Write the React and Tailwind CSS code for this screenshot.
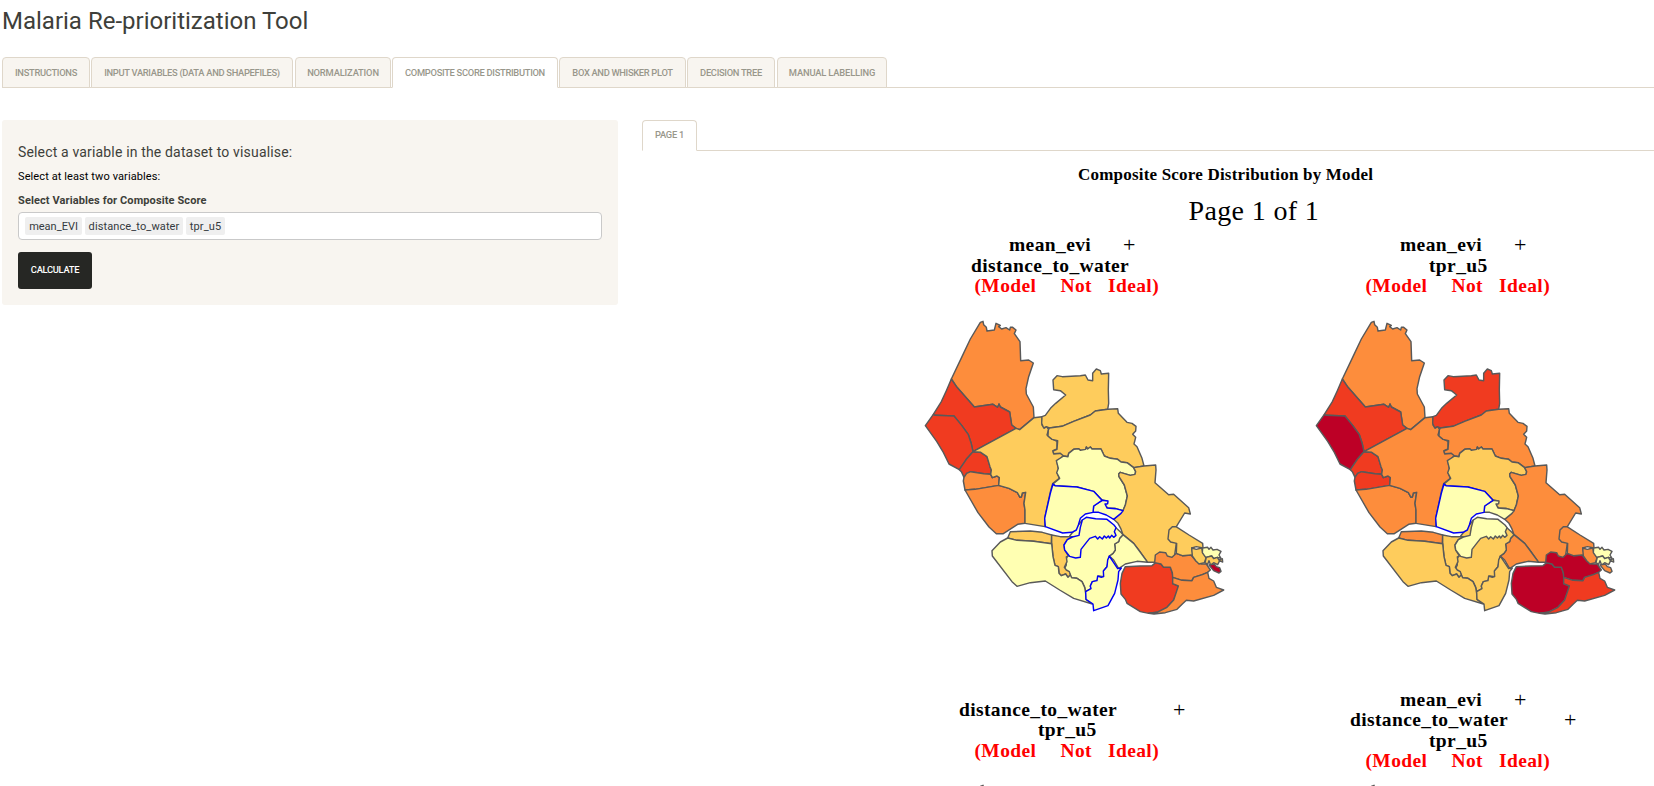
const REGIONS = {
  A: '222,34 214,37 184,87 159,140 127,207 144,232 196,291 252,283 266,292 270,282 274,291 302,306 308,345 321,355 332,359 375,323 373,291 352,252 351,236 359,200 373,159 359,150 335,152 333,95 316,71 321,60 311,52 304,52 302,60 291,53 278,57 269,50 274,46 261,40 256,60 234,63 232,52 224,44',
  B: '127,207 112,242 97,275 73,313 78,316 135,318 158,346 178,374 186,398 192,425 321,355 308,345 302,306 274,291 270,282 266,292 252,283 196,291 144,232',
  C: '73,313 49,347 83,394 103,427 120,462 151,479 172,448 192,425 186,398 178,374 158,346 135,318 78,316',
  D: '151,479 157,485 165,502 173,490 185,485 225,491 245,493 247,480 243,470 234,440 215,427 192,425 172,448',
  E: '165,502 163,513 168,540 198,538 269,526 271,503 264,498 250,503 245,493 225,491 185,485 173,490',
  F: '168,540 207,608 240,651 262,671 283,671 326,643 348,640 348,600 345,580 350,547 340,549 337,561 333,562 325,548 300,535 269,526 198,538',
  G: '192,425 321,355 332,359 375,323 399,320 399,345 407,354 414,348 416,355 419,358 414,375 426,385 444,394 444,417 432,422 434,431 462,429 467,435 462,438 444,455 449,480 445,490 451,505 431,521 424,546 408,620 408,650 348,640 348,600 345,580 350,547 340,549 337,561 333,562 325,548 300,535 269,526 271,503 264,498 250,503 245,493 247,480 243,470 234,440 215,427',
  H: '399,320 409,316 426,293 440,280 470,255 454,242 434,239 432,210 444,197 460,200 514,197 529,195 537,210 551,212 551,190 562,177 574,182 577,192 599,190 598,240 599,280 596,298 559,303 544,315 494,334 459,349 421,354 412,350 404,354 398,340',
  I: '421,354 459,349 494,334 544,315 559,303 596,298 626,296 628,310 654,337 669,340 681,349 680,363 671,373 680,382 675,402 684,410 699,445 705,468 674,473 654,458 636,456 626,448 604,445 586,438 576,417 549,417 544,411 536,417 532,411 530,418 514,421 509,416 494,418 479,430 477,440 464,438 454,430 434,431 432,423 444,418 446,392 429,388 417,378 418,360',
  J: '464,438 477,440 479,430 494,418 509,416 514,421 530,418 532,411 536,417 544,411 549,417 576,417 586,438 604,445 626,448 636,456 654,458 674,473 680,485 678,493 664,496 634,487 629,492 630,500 646,525 655,558 649,585 642,602 619,595 599,595 589,588 594,573 579,570 554,544 504,531 438,527 432,522 452,505 443,488 448,475 442,452',
  K: '432,522 438,527 504,531 554,544 579,571 554,588 552,607 529,612 514,625 508,645 502,660 489,667 461,669 409,650 407,625 424,550',
  L: '579,571 597,573 596,581 588,582 594,594 619,596 642,602 636,610 614,628 592,615 569,607 552,607 554,588',
  M: '705,468 740,465 741,480 738,518 779,554 794,553 839,593 844,612 827,609 802,650 802,700 796,742 740,757 716,757 689,720 674,700 642,674 635,655 627,640 614,628 642,602 649,585 655,558 646,525 630,500 629,492 634,487 664,496 678,493 680,485 674,473',
  N: '642,674 674,700 689,720 716,757 684,754 649,762 629,776 614,750 601,738 612,730 619,720 617,702 629,695 632,685',
  P: '482,678 520,630 600,635 619,652 637,668 642,674 632,685 629,695 617,702 619,720 612,730 601,738 594,770 586,780 584,800 569,798 564,812 550,815 544,828 546,836 530,845 527,832 519,815 504,805 486,803 484,793 471,783 466,777 472,765 468,750 474,742',
  O: '532,622 560,626 594,628 615,645 621,653 616,665 621,676 614,682 608,676 602,684 598,678 592,684 586,678 580,687 572,680 566,687 559,679 542,685 530,700 516,718 514,742 500,744 482,739 467,720 465,705 475,689 490,681 510,676 514,652 520,630',
  Q: '304,665 364,663 400,667 428,675 427,701 374,694 324,691 296,684',
  R: '428,675 454,680 493,680 475,689 465,705 467,720 478,738 472,741 474,755 466,772 472,780 481,785 484,795 477,802 470,792 457,797 450,790 448,770 438,766 432,740 428,700',
  W: '296,684 324,691 374,694 428,701 432,740 438,766 448,770 450,790 457,797 470,792 477,802 484,795 488,803 504,805 519,815 527,832 530,850 531,868 550,882 494,865 452,840 409,813 364,818 324,829 309,815 250,738 249,722 274,696',
  S: '601,738 612,755 626,776 637,774 629,785 627,810 617,850 597,887 554,902 552,882 531,868 530,845 546,836 544,828 550,815 564,812 566,798 577,802 584,800 583,783 594,770 596,750',
  T: '649,770 694,768 729,767 740,758 756,762 764,772 784,772 790,788 792,800 791,821 808,828 804,845 794,870 774,892 744,907 719,910 694,905 654,880 649,868 636,852 634,820 639,790',
  U: '737,758 739,735 752,726 770,728 775,738 789,742 802,730 820,737 846,735 860,752 878,762 892,762 904,780 896,787 880,794 854,802 849,812 819,811 791,802 790,788 784,772 764,772 756,762',
  V: '791,802 819,811 849,812 854,802 880,794 896,787 900,805 914,813 922,832 944,840 914,856 854,873 832,871 820,882 804,898 769,908 735,912 719,910 744,907 774,892 794,870 808,828 791,821',
  X: '790,650 801,650 840,675 881,700 882,714 862,710 848,714 854,738 846,735 820,737 802,730 803,700 785,696 777,687 780,660',
  Y: '848,714 862,718 878,714 882,730 892,742 886,758 870,762 860,752 850,738',
  Z: '881,714 896,712 900,718 906,712 912,720 924,718 936,724 930,735 936,745 925,742 914,746 908,738 890,742 880,728',
  Za: '892,742 908,738 914,746 925,742 930,750 940,746 941,756 932,752 926,764 914,758 905,766 900,752 896,763 888,758',
  Zb: '900,765 916,762 922,770 932,773 936,784 930,789 914,782',
};

const FILLS = {
  y: 'fill-[#ffffb2]',
  l: 'fill-[#fecc5c]',
  o: 'fill-[#fd8d3c]',
  r: 'fill-[#f03b20]',
  d: 'fill-[#bd0026]',
};

const MAP_ONE = {
  A: 'o', B: 'r', C: 'r', D: 'r', E: 'o', F: 'o', G: 'l', H: 'l', I: 'l', J: 'y', M: 'l', N: 'y',
  P: 'y', Q: 'l', R: 'l', W: 'y', T: 'r', U: 'o', V: 'o', X: 'l', Y: 'l', Z: 'y', Za: 'l', Zb: 'd',
  L: 'y', K: 'y', O: 'y', S: 'y',
};
const MAP_TWO = {
  A: 'o', B: 'r', C: 'd', D: 'r', E: 'r', F: 'o', G: 'o', H: 'r', I: 'o', J: 'l', M: 'o', N: 'o',
  P: 'l', Q: 'o', R: 'l', W: 'l', T: 'd', U: 'd', V: 'r', X: 'o', Y: 'o', Z: 'y', Za: 'y', Zb: 'o',
  L: 'y', O: 'y', S: 'l', K: 'y',
};

function DistrictMap({ levels, outlined }) {
  return (
    <svg viewBox="0 0 1062 960" className="-ml-[30px] block h-[320px] w-[354px]" strokeLinejoin="round">
      {Object.entries(levels).map(([id, level]) => (
        <polygon
          key={id}
          points={REGIONS[id]}
          strokeWidth="4.3"
          className={`${FILLS[level]} ${outlined.includes(id) ? 'stroke-[#0000f5]' : 'stroke-[#595959]'}`}
        />
      ))}
    </svg>
  );
}

const TABS = [
  ['Instructions', 'w-[88px] mr-[1px]'],
  ['Input Variables (Data and Shapefiles)', 'w-[202px] mr-[2px]'],
  ['Normalization', 'w-[96px] mr-[1px]'],
  ['Composite Score Distribution', 'w-[166px] mr-[1px]'],
  ['Box and Whisker Plot', 'w-[127px] mr-[1px]'],
  ['Decision Tree', 'w-[88px] mr-[2px]'],
  ['Manual Labelling', 'w-[110px]'],
];

const TRACKING = {
  Normalization: 'tracking-[-0.3px] pr-[3px]',
  'Box and Whisker Plot': 'tracking-[-0.33px]',
  'Manual Labelling': 'tracking-[-0.3px]',
  'Decision Tree': 'tracking-[-0.3px]',
  'Page 1': 'tracking-[-0.25px] pb-[2px]',
};
TRACKING.Normalization = 'tracking-[-0.16px]';
TRACKING['Manual Labelling'] = 'tracking-[-0.16px]';

function Tab({ label, active, size }) {
  return (
    <button
      className={`-mb-px flex h-[31px] shrink-0 items-center justify-center rounded-t-[4px] border border-[#dfd7ca] text-[9.35px] leading-none font-medium whitespace-nowrap text-[#98978b] uppercase ${size} ${TRACKING[label] ?? 'tracking-[-0.3px]'} ${active ? 'border-b-white bg-white' : 'bg-[#f8f5f0]'}`}
    >
      {label}
    </button>
  );
}

function Line({ text, plus, inset }) {
  return (
    <div className={`flex h-[20.5px] items-center whitespace-pre ${inset}`}>
      <span className="font-bold">{text}</span>
      {plus && <span className={`text-[22px] ${plus}`}>+</span>}
    </div>
  );
}

function NotIdeal() {
  return (
    <div className="flex h-[20.5px] items-center pl-[35.5px] font-bold text-[#ff0000]">
      <span className="w-[86px]">(Model</span>
      <span className="w-[47.5px]">Not</span>
      <span>Ideal)</span>
    </div>
  );
}

export default function App() {
  return (
    <div className="h-[786px] w-[1654px] overflow-hidden bg-white pl-[2px] font-['Roboto',sans-serif]">
      <h1 className="h-[57px] pt-[7px] text-[24px] leading-[28px] text-[#3e3f3a]">Malaria Re-prioritization Tool</h1>
      <nav className="flex h-[31px] border-b border-[#dfd7ca]">
        {TABS.map(([label, size]) => (
          <Tab key={label} label={label} size={size} active={label.startsWith('Composite')} />
        ))}
      </nav>
      <main className="flex pt-[32px]">
        <section className="h-[185px] w-[616px] shrink-0 rounded-[3px] bg-[#f8f5f0] px-4 pt-[24px] text-[#3e3f3a]">
          <h2 className="text-[14px] leading-[17px] tracking-[0.16px]">Select a variable in the dataset to visualise:</h2>
          <p className="mt-[8px] text-[11px] leading-[15px] tracking-[0.1px] text-black">Select at least two variables:</p>
          <p className="mt-[9px] text-[11px] leading-[15px] font-bold tracking-[0.11px]">Select Variables for Composite Score</p>
          <div className="mt-[4px] flex h-[28px] items-center gap-[3px] rounded-[4px] border border-[#c9c9c9] bg-white pl-[6px] text-[11px] text-[#343a40]">
            <span className="flex h-[18px] w-[57px] items-center justify-center rounded-[2px] bg-[#efefef] pt-[2px]">mean_EVI</span>
            <span className="flex h-[18px] w-[98px] items-center justify-center rounded-[2px] bg-[#efefef] pt-[2px] tracking-[0.11px]">distance_to_water</span>
            <span className="flex h-[18px] w-[39px] items-center justify-center rounded-[2px] bg-[#efefef] pt-[2px] tracking-[0.11px]">tpr_u5</span>
          </div>
          <button className="mt-[12px] flex h-[37px] w-[74px] items-center justify-center rounded-[3px] bg-[#262724] text-[9.35px] font-medium tracking-[-0.3px] text-white uppercase">
            Calculate
          </button>
        </section>
        <section className="ml-[24px] w-[1012px] shrink-0">
          <div className="flex h-[31px] border-b border-[#dfd7ca]">
            <Tab label="Page 1" size="w-[55px]" active />
          </div>
          <div className="font-['Liberation_Serif',serif] text-black">
            <h3 className="h-[47px] pt-[14px] pl-[436px] text-[17px] leading-[20px] font-bold tracking-[0.2px]">
              Composite Score Distribution by Model
            </h3>
            <p className="h-[37px] pl-[546.5px] text-[28px] leading-[26px] tracking-[0.35px]">Page 1 of 1</p>
            <div className="grid grid-cols-[391px_391px] pl-[297px] text-[19.5px] leading-[20px] tracking-[0.38px]">
              <div className="h-[454.5px]">
                <Line inset="pl-[70px]" text="mean_evi" plus="pl-[32px]" />
                <Line inset="pl-[32px]" text="distance_to_water" />
                <NotIdeal />
                <div className="pt-[13.5px]">
                  <DistrictMap levels={MAP_ONE} outlined={['K', 'L', 'O', 'S']} />
                </div>
              </div>
              <div className="h-[454.5px]">
                <Line inset="pl-[70px]" text="mean_evi" plus="pl-[32px]" />
                <Line inset="pl-[99px]" text="tpr_u5" />
                <NotIdeal />
                <div className="pt-[13.5px]">
                  <DistrictMap levels={MAP_TWO} outlined={['K']} />
                </div>
              </div>
              <div className="pt-[10px]">
                <Line inset="pl-[20px]" text="distance_to_water" plus="pl-[56px]" />
                <Line inset="pl-[99px]" text="tpr_u5" />
                <NotIdeal />
                <div className="pt-[13px]">
                  <DistrictMap levels={MAP_ONE} outlined={[]} />
                </div>
              </div>
              <div>
                <Line inset="pl-[70px]" text="mean_evi" plus="pl-[32px]" />
                <Line inset="pl-[20px]" text="distance_to_water" plus="pl-[56px]" />
                <Line inset="pl-[99px]" text="tpr_u5" />
                <NotIdeal />
                <div className="pt-[2.5px]">
                  <DistrictMap levels={MAP_TWO} outlined={[]} />
                </div>
              </div>
            </div>
          </div>
        </section>
      </main>
    </div>
  );
}
